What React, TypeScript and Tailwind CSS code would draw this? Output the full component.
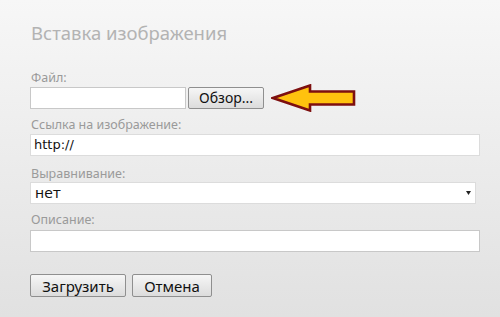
export default function App() {
  return (
    <div className="w-[500px] h-[317px] bg-gradient-to-b from-[#f7f7f7] to-[#e1e1e1] pl-[30px] pt-[20px] font-['Noto_Sans',sans-serif] overflow-hidden">
      <h1 className="text-[18.5px] leading-[26px] text-[#b3b3b3] ml-[1px]">Вставка изображения</h1>

      <div className="mt-[24px] text-[12.5px] leading-[16px] text-[#9a9a9a] ml-[1px]">Файл:</div>
      <div className="flex items-center h-[22px] mt-[1px]">
        <div className="w-[156px] h-[22px] bg-white border border-[#c8c8c8]"></div>
        <button className="ml-[2px] w-[76px] h-[22px] border border-[#8f8f8f] rounded-[2px] bg-gradient-to-b from-[#f6f6f6] to-[#dcdcdc] text-[14px] leading-[20px] text-[#111]">
          Обзор...
        </button>
        <svg className="ml-[7px]" width="85" height="28" viewBox="0 0 85 28">
          <path
            d="M2 14 L39 1.5 L39 7.5 L83 7.5 L83 20.5 L39 20.5 L39 26.5 Z"
            fill="#ffc20e"
            stroke="#7d0f0f"
            strokeWidth="2.6"
            strokeLinejoin="miter"
          />
        </svg>
      </div>

      <div className="mt-[8px] text-[12.5px] leading-[16px] text-[#9a9a9a] ml-[1px]">Ссылка на изображение:</div>
      <div className="w-[450px] h-[22px] mt-[1px] bg-white border border-[#dcdcdc] px-[3px] text-[13px] leading-[20px] text-[#111] font-['DejaVu_Sans',sans-serif]">
        http://
      </div>

      <div className="mt-[10px] text-[12.5px] leading-[16px] text-[#9a9a9a] ml-[1px]">Выравнивание:</div>
      <div className="w-[446px] h-[22px] bg-white border border-[#dcdcdc] pl-[4px] pr-[4px] flex items-center justify-between">
        <span className="text-[14px] leading-[20px] text-[#111] font-['DejaVu_Sans',sans-serif]">нет</span>
        <svg width="5" height="4" viewBox="0 0 5 4">
          <path d="M0 0 L5 0 L2.5 4 Z" fill="#222" />
        </svg>
      </div>

      <div className="mt-[8px] text-[12.5px] leading-[16px] text-[#9a9a9a] ml-[1px]">Описание:</div>
      <div className="w-[450px] h-[22px] mt-[2px] bg-white border border-[#c8c8c8]"></div>

      <div className="flex gap-[6px] mt-[22px]">
        <button className="w-[96px] h-[23px] border border-[#8f8f8f] rounded-[2px] bg-gradient-to-b from-[#f6f6f6] to-[#dcdcdc] text-[15px] leading-[20px] text-[#111]">
          Загрузить
        </button>
        <button className="w-[80px] h-[23px] border border-[#8f8f8f] rounded-[2px] bg-gradient-to-b from-[#f6f6f6] to-[#dcdcdc] text-[15px] leading-[20px] text-[#111]">
          Отмена
        </button>
      </div>
    </div>
  );
}
